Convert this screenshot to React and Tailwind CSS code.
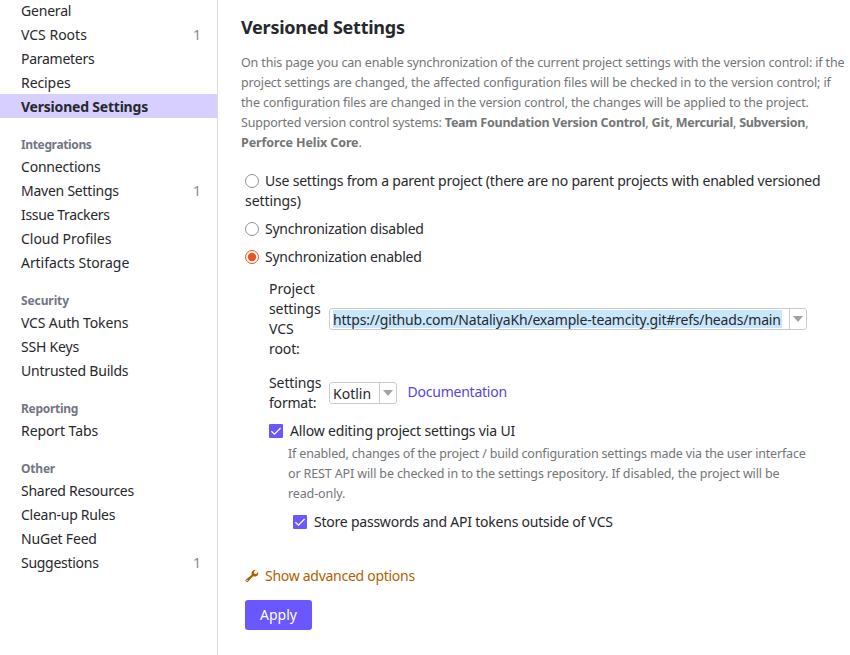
const sections = [
  {
    items: [
      { label: "General", spacing: "tracking-[-0.2px]" },
      { label: "VCS Roots", spacing: "tracking-normal" },
      { label: "Parameters", spacing: "tracking-[-0.27px]" },
      { label: "Recipes", spacing: "tracking-[-0.08px]" },
      { label: "Versioned Settings", spacing: "tracking-[-0.21px]", active: true },
    ],
  },
  {
    title: "Integrations",
    titleSpacing: "tracking-[-0.36px]",
    items: [
      { label: "Connections", spacing: "tracking-[-0.2px]" },
      { label: "Maven Settings", spacing: "tracking-[-0.24px]", count: 1 },
      { label: "Issue Trackers", spacing: "tracking-[-0.34px]" },
      { label: "Cloud Profiles", spacing: "tracking-[-0.04px]" },
      { label: "Artifacts Storage", spacing: "tracking-[-0.06px]" },
    ],
  },
  {
    title: "Security",
    titleSpacing: "tracking-[-0.1px]",
    items: [
      { label: "VCS Auth Tokens", spacing: "tracking-[-0.14px]" },
      { label: "SSH Keys", spacing: "tracking-[-0.2px]" },
      { label: "Untrusted Builds", spacing: "tracking-[-0.2px]" },
    ],
  },
  {
    title: "Reporting",
    titleSpacing: "tracking-[-0.28px]",
    items: [{ label: "Report Tabs", spacing: "tracking-[-0.08px]" }],
  },
  {
    title: "Other",
    titleSpacing: "tracking-[-0.2px]",
    items: [
      { label: "Shared Resources", spacing: "tracking-[-0.26px]" },
      { label: "Clean-up Rules", spacing: "tracking-[-0.27px]" },
      { label: "NuGet Feed", spacing: "tracking-[-0.2px]" },
      { label: "Suggestions", spacing: "tracking-[-0.28px]", count: 1 },
    ],
  },
];

sections[0].items[1].count = 1;

function Sidebar() {
  return (
    <nav className="h-full w-[218px] shrink-0 border-r border-[#dcdce0]">
      <div className="-mt-0.5">
        {sections.map((section, i) => (
          <div key={i}>
            {section.title && (
              <h3 className={`h-9 pt-[17px] pl-[21px] text-[12px] leading-5 font-bold text-[#737584] ${section.titleSpacing}`}>
                {section.title}
              </h3>
            )}
            {section.items.map((item) => (
              <div
                key={item.label}
                className={`flex h-6 items-center justify-between pt-0.5 pr-4 pl-[21px] leading-6 ${item.active ? "bg-[#d6cfff] font-bold" : ""}`}
              >
                <span className={item.spacing}>{item.label}</span>
                {item.count && <span className="text-[#8a8a90]">{item.count}</span>}
              </div>
            ))}
          </div>
        ))}
      </div>
    </nav>
  );
}

function Radio({ checked }) {
  return (
    <svg className="mr-1.5 inline-block size-3.5 align-[-2px]" viewBox="0 0 14 14" fill="none">
      <circle cx="7" cy="7" r="6.5" fill="#fff" stroke={checked ? "#e95420" : "#8f8f9d"} strokeWidth="1" />
      {checked && <circle cx="7" cy="7" r="4.2" fill="#e95420" />}
    </svg>
  );
}

function Checkbox() {
  return (
    <svg className="size-3.5 shrink-0" viewBox="0 0 14 14" fill="none">
      <rect width="14" height="14" rx="1" fill="#6b57ff" />
      <path d="M2.4 7.2 5.5 10.2 11.6 4" stroke="#fff" strokeWidth="1.2" />
    </svg>
  );
}

function Combo({ children, className }) {
  return (
    <div className={`flex h-[22px] rounded-[3px] border border-[#c9c9d2] bg-white ${className}`}>
      <div className="flex flex-1 items-center pl-[3px]">{children}</div>
      <div className="flex w-[17px] items-center justify-center border-l border-[#c9c9d2]">
        <svg className="h-[6px] w-[10px]" viewBox="0 0 10 6">
          <path d="M0 0h10L5 6z" fill="#a2a2a2" />
        </svg>
      </div>
    </div>
  );
}

export default function App() {
  return (
    <div className="flex h-[655px] w-[850px] overflow-hidden bg-white font-['Noto_Sans',sans-serif] text-[14px] leading-5 whitespace-nowrap text-[#27282c]">
      <Sidebar />
      <main className="w-[632px] pl-[23px]">
        <h1 className="mt-[15px] h-6 text-[18px] leading-6 font-bold tracking-[-0.24px]">Versioned Settings</h1>

        <div className="mt-3.5 text-[12.5px] text-[#737577]">
          <div className="tracking-[-0.155px]">On this page you can enable synchronization of the current project settings with the version control: if the</div>
          <div className="tracking-[-0.125px]">project settings are changed, the affected configuration files will be checked in to the version control; if</div>
          <div className="tracking-[-0.16px]">the configuration files are changed in the version control, the changes will be applied to the project.</div>
          <div className="tracking-[-0.19px]">
            Supported version control systems: <b className="tracking-[-0.24px]">Team Foundation Version Control</b>, <b className="tracking-normal">Git</b>,{" "}
            <b className="tracking-[-0.29px]">Mercurial</b>, <b className="tracking-[-0.28px]">Subversion</b>,
          </div>
          <div><b className="tracking-[-0.11px]">Perforce Helix Core</b>.</div>
        </div>

        <div className="mt-[18px] pl-1">
          <div className="h-10">
            <div className="h-5 tracking-[-0.208px]">
              <Radio />Use settings from a parent project (there are no parent projects with enabled versioned
            </div>
            <div className="tracking-[-0.08px]">settings)</div>
          </div>
          <div className="mt-2 h-5 tracking-[-0.24px]"><Radio />Synchronization disabled</div>
          <div className="mt-2 h-5 tracking-[-0.24px]"><Radio checked />Synchronization enabled</div>

          <div className="pl-6">
            <div className="mt-3 flex h-20">
              <div className="w-[60px]">
                <div>Project</div>
                <div className="tracking-[-0.1px]">settings</div>
                <div>VCS</div>
                <div className="tracking-[-0.1px]">root:</div>
              </div>
              <Combo className="mt-[29px] w-[478px]">
                <span className="h-[18px] bg-[#c8e7fd] pr-px leading-5 tracking-[-0.18px]">
                  https://github.com/NataliyaKh/example-teamcity.git#refs/heads/main
                </span>
              </Combo>
            </div>

            <div className="mt-3.5 flex h-10">
              <div className="w-[60px]">
                <div className="tracking-[-0.1px]">Settings</div>
                <div className="tracking-[-0.2px]">format:</div>
              </div>
              <Combo className="mt-[9px] w-[68px]">
                <span className="pt-0.5">Kotlin</span>
              </Combo>
              <a className="mt-[9px] ml-[10.5px] tracking-[-0.23px] text-[#5a45d6]">Documentation</a>
            </div>

            <div className="mt-2 flex h-5 items-center gap-[7px] tracking-[-0.17px]">
              <Checkbox />
              <span>Allow editing project settings via UI</span>
            </div>
            <div className="mt-[3px] pl-[19px] text-[12.5px] text-[#737577]">
              <div className="tracking-[-0.17px]">If enabled, changes of the project / build configuration settings made via the user interface</div>
              <div className="tracking-[-0.13px]">or REST API will be checked in to the settings repository. If disabled, the project will be</div>
              <div className="tracking-[-0.12px]">read-only.</div>
            </div>
            <div className="mt-2 flex h-5 items-center gap-[7px] pl-6 tracking-[-0.225px]">
              <Checkbox />
              <span>Store passwords and API tokens outside of VCS</span>
            </div>
          </div>

          <div className="mt-[34px] flex h-5 items-center gap-1.5 text-[#b35f00]">
            <svg className="size-3.5" viewBox="0 0 14 14" fill="currentColor">
              <path d="M10.8.7 8.9 2.8 9.2 4.7 11.1 5 13.1 3.1C13.6 5 12.8 6.6 11.3 7.2 10.2 7.7 9 7.6 8.1 7.3L3.3 12.4C2.6 13.2 1.6 13.3.9 12.6.2 11.9.4 10.9 1.2 10.2L6.6 5.9C6.3 4.8 6.4 3.4 7.1 2.4 7.9 1.2 9.3.4 10.8.7zM2.1 10.8a.65.65 0 1 0 .01 1.3.65.65 0 0 0-.01-1.3z" />
            </svg>
            <span className="tracking-[-0.28px]">Show advanced options</span>
          </div>
          <button className="mt-3.5 block h-[30px] w-[67px] rounded-[3px] bg-[#6b57ff] text-[14px] text-white">Apply</button>
        </div>
      </main>
    </div>
  );
}
